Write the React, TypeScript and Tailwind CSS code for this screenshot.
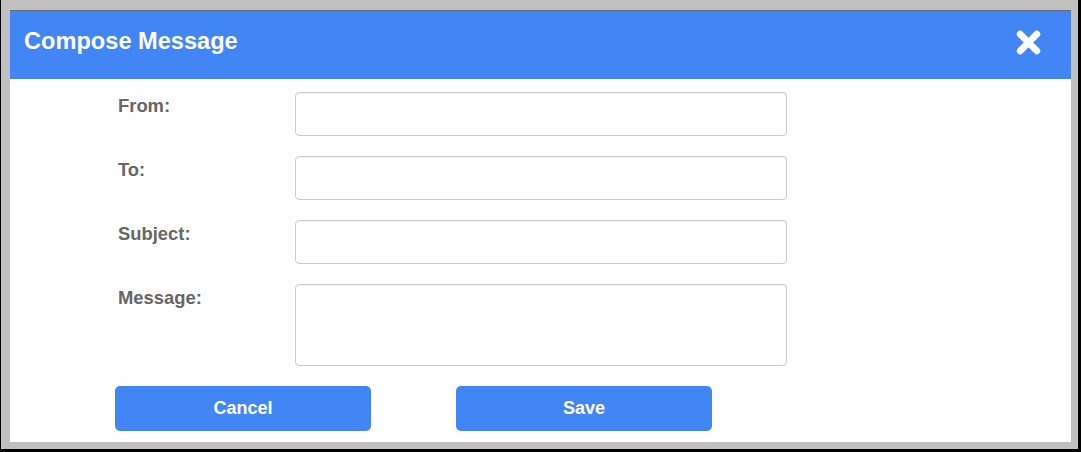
import React from 'react'

const fields = [
  { label: 'From:', tall: false },
  { label: 'To:', tall: false },
  { label: 'Subject:', tall: false },
  { label: 'Message:', tall: true },
]

export default function App() {
  return (
    <div
      className="w-[1081px] h-[452px] bg-[#c0c0c0] border-l border-r-[3px] border-b-[3px] border-black pt-[10px] pl-[9px] pr-[7px] pb-[7px]"
      style={{ fontFamily: '"Liberation Sans", Arial, sans-serif' }}
    >
      <div className="h-full bg-white border-t border-[#6b6b6b] flex flex-col">
        {/* header */}
        <div className="h-[68px] bg-[#4285f4] flex items-center justify-between pl-[14px] pr-[30px]">
          <h1 className="text-[23.6px] font-bold text-white leading-none -mt-[6px]">Compose Message</h1>
          <button className="text-white -mt-[6px]" aria-label="Close">
            <svg width="25" height="25" viewBox="0 0 24 24">
              <path d="M4 4 L20 20 M20 4 L4 20" stroke="white" strokeWidth="6.5" strokeLinecap="round" />
            </svg>
          </button>
        </div>

        {/* form */}
        <div className="pt-[13px] pl-[108px] flex flex-col gap-[20px]">
          {fields.map((f) => (
            <div key={f.label} className="grid grid-cols-[177px_492px]">
              <label className="mt-[4px] text-[18.4px] leading-[20px] font-bold text-[#666]">{f.label}</label>
              {f.tall ? (
                <textarea className="h-[82px] w-full border border-[#ccc] rounded-[4px] shadow-[inset_0_1px_1px_rgba(0,0,0,0.06)] resize-none outline-none" />
              ) : (
                <input className="h-[44px] w-full border border-[#ccc] rounded-[4px] shadow-[inset_0_1px_1px_rgba(0,0,0,0.06)] outline-none" />
              )}
            </div>
          ))}
        </div>

        <div className="pl-[105px] pt-[20px] flex gap-[85px]">
          <button className="w-[256px] h-[45px] rounded-[5px] bg-[#4285f4] text-white text-[18px] font-bold">Cancel</button>
          <button className="w-[256px] h-[45px] rounded-[5px] bg-[#4285f4] text-white text-[18px] font-bold">Save</button>
        </div>
      </div>
    </div>
  )
}
